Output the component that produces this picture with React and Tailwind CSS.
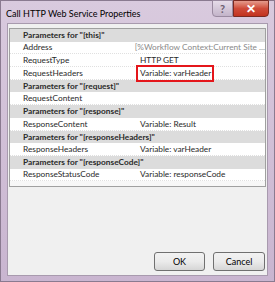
export default function App() {
  const rows = [
    { head: 'Parameters for "[this]"' },
    { name: 'Address', value: '[%Workflow Context:Current Site ...', dim: true },
    { name: 'RequestType', value: 'HTTP GET' },
    { name: 'RequestHeaders', value: 'Variable: varHeader', mark: true },
    { head: 'Parameters for "[request]"' },
    { name: 'RequestContent', value: '' },
    { head: 'Parameters for "[response]"' },
    { name: 'ResponseContent', value: 'Variable: Result' },
    { head: 'Parameters for "[responseHeaders]"' },
    { name: 'ResponseHeaders', value: 'Variable: varHeader' },
    { head: 'Parameters for "[responseCode]"' },
    { name: 'ResponseStatusCode', value: 'Variable: responseCode' },
  ]

  return (
    <div
      className="w-[275px] h-[282px] flex flex-col bg-gradient-to-b from-[#d9cade] to-[#c9b5d0] border border-[#8a7a90] text-[#1e1e1e]"
      style={{ fontFamily: 'Lato, "Open Sans", sans-serif' }}
    >
      {/* title bar */}
      <div className="h-[22px] flex items-start justify-between">
        <div className="pl-[5px] pt-[6px] text-[9px] leading-[14px] text-black">Call HTTP Web Service Properties</div>
        <div className="flex mr-[5px] -mt-px">
          <div className="w-[21px] h-[17px] rounded-bl-[4px] border border-[#9a8aa0] bg-gradient-to-b from-[#e6dce9] to-[#c3b4c9] flex items-center justify-center text-[11px] font-bold text-[#6b5d70] leading-none">?</div>
          <div className="w-[36px] h-[17px] rounded-br-[4px] border border-[#7a2a22] bg-gradient-to-b from-[#e49a8c] via-[#cf4b39] to-[#c2321f] flex items-center justify-center text-white text-[12px] font-bold leading-none">✕</div>
        </div>
      </div>

      {/* client */}
      <div className="flex-1 mx-[6px] mb-[5px] bg-[#f0f0f0] border border-[#a89aae] flex flex-col">
        <div className="mx-[1px] mt-[4px] h-[159px] border border-[#a0a0a0] bg-[#f7f7f7] flex flex-col text-[8.3px]">
          {rows.map((r, i) =>
            r.head ? (
              <div key={i} className="h-[12.7px] flex items-center pl-[13px] bg-[#dcdcdc] font-bold text-[#2a2a2a] leading-none">
                {r.head}
              </div>
            ) : (
              <div key={i} className="h-[12.7px] flex items-center bg-white border-b border-dotted border-[#e0e0e0] leading-none">
                <div className="w-[130px] pl-[13px] text-[#2a2a2a]">{r.name}</div>
                <div className="relative flex-1 whitespace-nowrap overflow-visible">
                  <span className={r.dim ? 'text-[#8a8a8a]' : 'text-[#2a2a2a]'}>{r.value}</span>
                  {r.mark && (
                    <div className="absolute left-[-4px] top-[-4px] w-[78px] h-[17px] border-2 border-[#e4161b]" />
                  )}
                </div>
              </div>
            )
          )}
        </div>

        <div className="flex-1" />

        <div className="flex justify-end gap-[8px] pr-[2px] pb-[4px]">
          <button className="w-[51px] h-[19px] rounded-[3px] border border-[#707070] bg-gradient-to-b from-[#f2f2f2] via-[#ebebeb] to-[#d6d6d6] text-[9px] leading-none text-black">OK</button>
          <button className="w-[52px] h-[19px] rounded-[3px] border border-[#707070] bg-gradient-to-b from-[#f2f2f2] via-[#ebebeb] to-[#d6d6d6] text-[9px] leading-none text-black">Cancel</button>
        </div>
      </div>
    </div>
  )
}
